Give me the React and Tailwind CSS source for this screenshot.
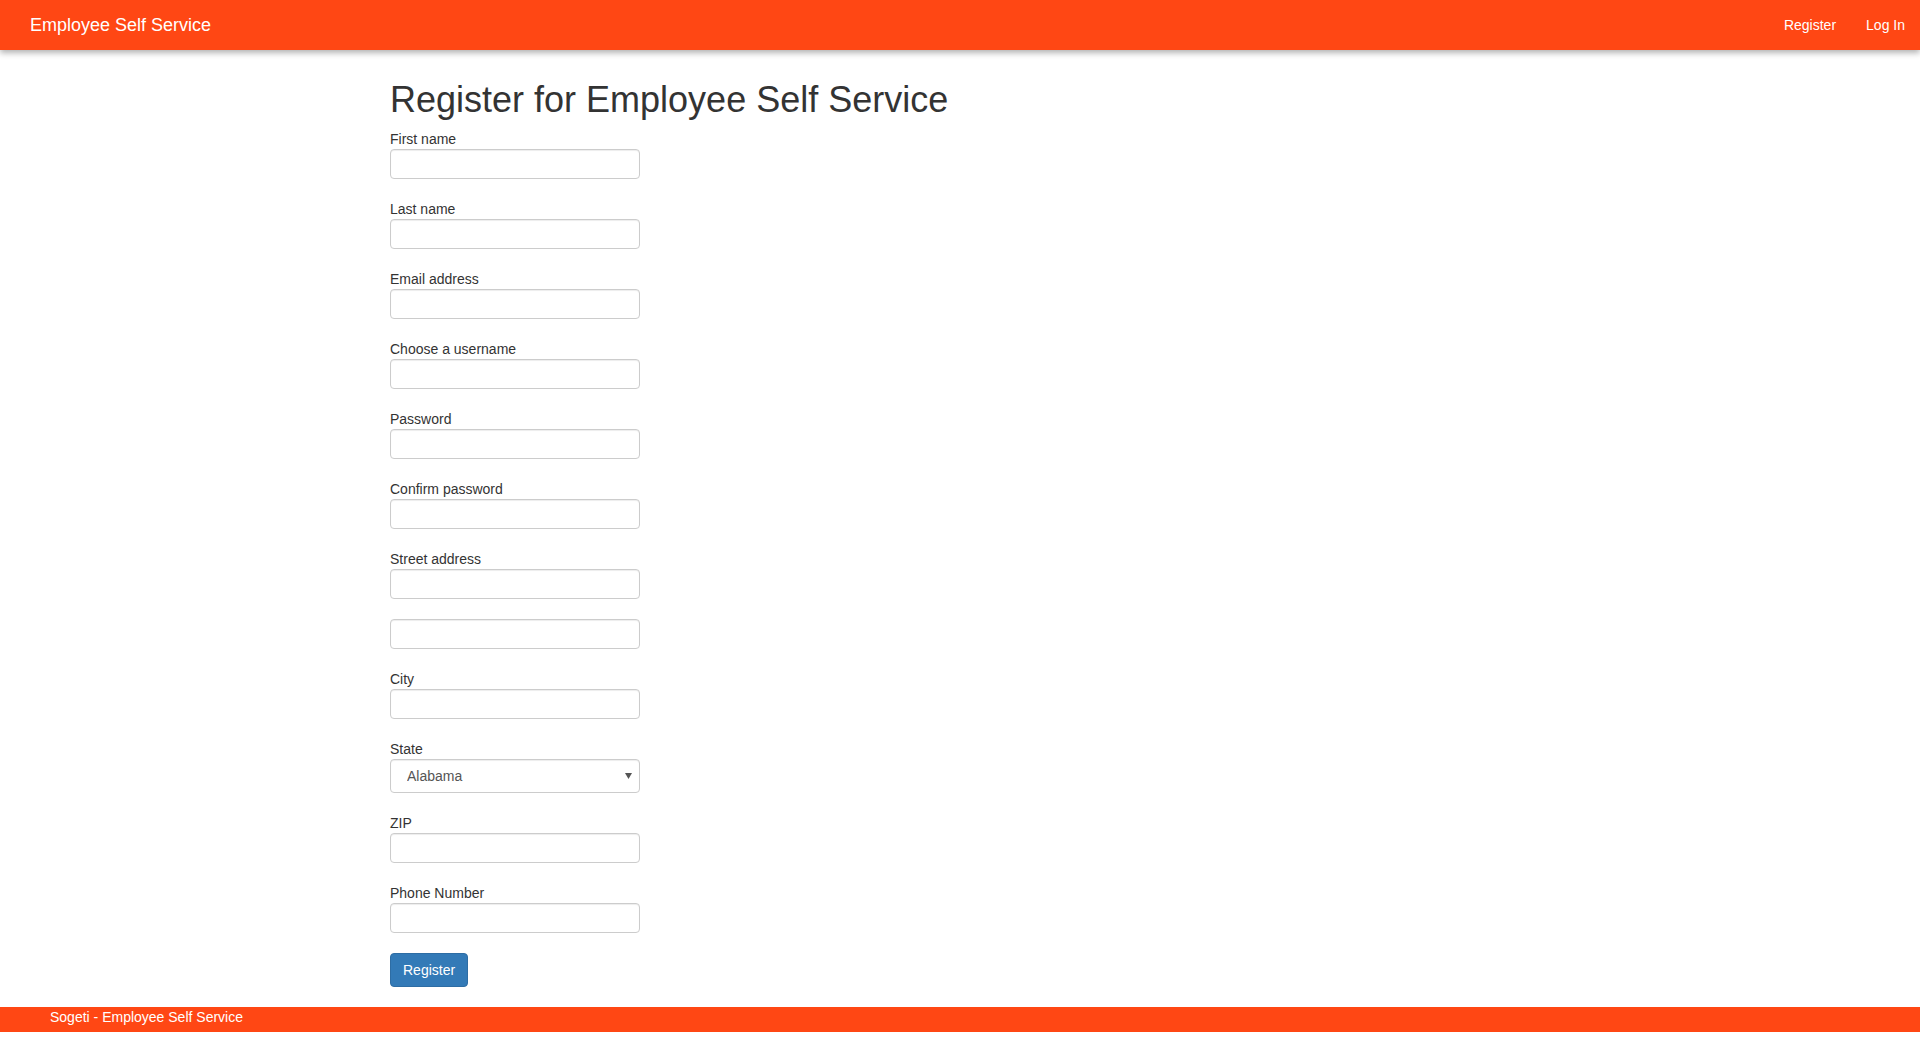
import React from 'react';

const fields = [
  { label: 'First name' },
  { label: 'Last name' },
  { label: 'Email address', type: 'email' },
  { label: 'Choose a username' },
  { label: 'Password', type: 'password' },
  { label: 'Confirm password', type: 'password' },
];

const inputClass =
  'block w-[250px] h-[30px] px-3 bg-white border border-[#ccc] rounded-[4px] shadow-[inset_0_1px_1px_rgba(0,0,0,0.075)] text-sm text-[#555] outline-none';

const labelClass = 'block h-[21px] leading-[22px] text-sm text-[#333]';

const Field = ({ label, type = 'text' }) => (
  <div className="mb-[19px]">
    <label className={labelClass}>{label}</label>
    <input type={type} className={inputClass} />
  </div>
);

const App = () => {
  return (
    <div className="min-h-[1052px] bg-white font-['Liberation_Sans',Arial,sans-serif]">
      <nav className="h-[50px] bg-[#ff4714] flex items-center justify-between pl-[15px] shadow-[0_3px_6px_rgba(0,0,0,0.3)] relative">
        <a className="px-[15px] text-[18px] leading-[50px] text-white">Employee Self Service</a>
        <div className="flex">
          <a className="px-[15px] text-sm leading-[50px] text-white">Register</a>
          <a className="px-[15px] text-sm leading-[50px] text-white">Log In</a>
        </div>
      </nav>

      <main className="w-[1170px] mx-auto px-[15px] pt-[30px]">
        <h1 className="text-[36px] leading-[39.6px] text-[#333] mb-2">Register for Employee Self Service</h1>
        <form onSubmit={(e) => e.preventDefault()}>
          {fields.map((f) => (
            <Field key={f.label} label={f.label} type={f.type} />
          ))}

          <div className="mb-5">
            <label className={labelClass}>Street address</label>
            <input type="text" className={inputClass} />
          </div>
          <div className="mb-[19px]">
            <input type="text" className={inputClass} />
          </div>

          <Field label="City" />

          <div className="mb-[19px]">
            <label className={labelClass}>State</label>
            <div className="relative w-[250px]">
              <select className="block w-[250px] h-[34px] pl-4 pr-6 appearance-none bg-white border border-[#ccc] rounded-[4px] shadow-[inset_0_1px_1px_rgba(0,0,0,0.075)] text-sm text-[#555] outline-none">
                <option>Alabama</option>
                <option>Alaska</option>
                <option>Arizona</option>
              </select>
              <svg className="absolute right-[8px] top-[14px] pointer-events-none" width="7" height="6" viewBox="0 0 7 6">
                <path d="M0 0h7L3.5 6z" fill="#555" />
              </svg>
            </div>
          </div>

          <Field label="ZIP" />

          <div className="mb-5">
            <label className={labelClass}>Phone Number</label>
            <input type="tel" className={inputClass} />
          </div>

          <button
            type="submit"
            className="h-[34px] px-3 bg-[#337ab7] border border-[#2e6da4] rounded-[4px] text-sm text-white"
          >
            Register
          </button>
        </form>
      </main>

      <footer className="mt-5 h-[25px] bg-[#ff4714] pl-[50px]">
        <span className="block text-sm leading-5 text-white">Sogeti - Employee Self Service</span>
      </footer>
    </div>
  );
};

export default App;
